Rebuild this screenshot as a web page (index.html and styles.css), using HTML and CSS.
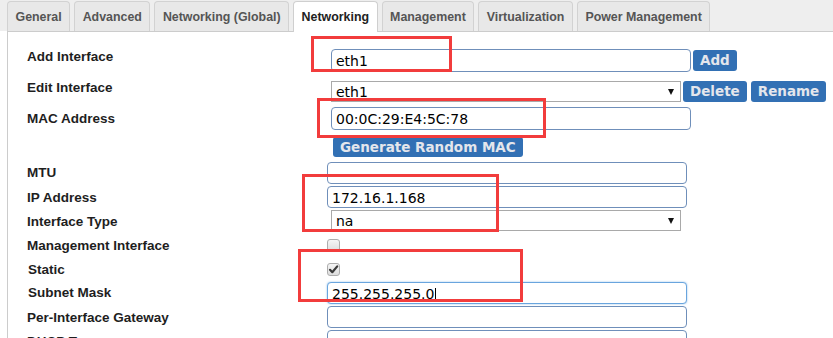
FILE: index.html
```html
<!DOCTYPE html>
<html>
<head>
<meta charset="utf-8">
<link rel="stylesheet" href="styles.css">
</head>
<body>
<div class="page">
  <div class="tabs">
    <div class="tab">General</div>
    <div class="tab">Advanced</div>
    <div class="tab">Networking (Global)</div>
    <div class="tab active">Networking</div>
    <div class="tab">Management</div>
    <div class="tab">Virtualization</div>
    <div class="tab">Power Management</div>
  </div>
  <div class="panel">
    <div class="form">
      <div class="lbl t0">Add Interface</div>
      <div class="ctrl m1 l4"><div class="in tall"><span class="val">eth1</span></div><span class="btn g2">Add</span></div>

      <div class="lbl t0">Edit Interface</div>
      <div class="ctrl m2 l4"><div class="sel"><span class="val">eth1</span><span class="arrow"></span></div><span class="btn g2">Delete</span><span class="btn g4">Rename</span></div>

      <div class="lbl">MAC Address</div>
      <div class="ctrl l4"><div class="in tall"><span class="val">00:0C:29:E4:5C:78</span></div></div>

      <div class="lbl"></div>
      <div class="ctrl l6"><span class="btn h20">Generate Random MAC</span></div>

      <div class="lbl t2">MTU</div>
      <div class="ctrl"><div class="in"></div></div>

      <div class="lbl">IP Address</div>
      <div class="ctrl"><div class="in"><span class="val">172.16.1.168</span></div></div>

      <div class="lbl">Interface Type</div>
      <div class="ctrl l4"><div class="sel"><span class="val">na</span><span class="arrow"></span></div></div>

      <div class="lbl">Management Interface</div>
      <div class="ctrl m5"><span class="cb"></span></div>

      <div class="lbl s1">Static</div>
      <div class="ctrl m5"><span class="cb"><svg width="11" height="11" viewBox="0 0 11 11"><path d="M2 5.8 L4.3 8.2 L9.2 2.4" fill="none" stroke="#3a3a3a" stroke-width="2.2" stroke-linecap="round" stroke-linejoin="round"/></svg></span></div>

      <div class="lbl t2 s1">Subnet Mask</div>
      <div class="ctrl"><div class="in focus"><span class="val">255.255.255.0</span><span class="caret"></span></div></div>

      <div class="lbl">Per-Interface Gateway</div>
      <div class="ctrl"><div class="in"></div></div>

      <div class="lbl">DHCP Type</div>
      <div class="ctrl"><div class="in"></div></div>
    </div>
  </div>
  <div class="mark mark-add"></div>
  <div class="mark mark-mac"></div>
  <div class="mark mark-ip"></div>
  <div class="mark mark-static"></div>
</div>
</body>
</html>
```
FILE: styles.css
```css
html, body {
  margin: 0;
  padding: 0;
  background: #fff;
}
.page {
  position: relative;
  width: 833px;
  height: 338px;
  overflow: hidden;
  font-family: "Liberation Sans", Arial, sans-serif;
}
.tabs {
  display: flex;
  align-items: flex-end;
  gap: 4px;
  height: 31px;
  padding-left: 7px;
  background: #eeeeee;
  box-sizing: border-box;
}
.tab {
  height: 30px;
  box-sizing: border-box;
  padding: 7px 7.5px 0 7.5px;
  line-height: 16px;
  font-size: 12.4px;
  font-weight: bold;
  color: #555;
  background: #e8e8e8;
  border: 1px solid #d2d2d2;
  border-bottom: none;
  border-radius: 4px 4px 0 0;
  white-space: nowrap;
}
.tab.active {
  height: 31px;
  margin-bottom: -1px;
  background: #fff;
  color: #222;
  border-color: #cfcfcf;
  position: relative;
  z-index: 1;
}
.panel {
  margin-left: 7px;
  height: 307px;
  box-sizing: border-box;
  border-top: 1px solid #cccccc;
  border-left: 1px solid #cccccc;
  padding: 16px 0 0 19px;
  overflow: hidden;
}
.form {
  display: grid;
  grid-template-columns: 300px 1fr;
  grid-template-rows: 31px 28px 30px 25px repeat(8, 24px);
}
.lbl {
  padding-top: 4px;
  font-size: 13.5px;
  line-height: 16px;
  font-weight: bold;
  color: #1e1e1e;
  white-space: nowrap;
}
.lbl.t0 { padding-top: 1px; }
.lbl.t2 { padding-top: 3px; }
.lbl.s1 { padding-left: 1px; }
.ctrl {
  display: flex;
  align-items: center;
  align-self: start;
}
.ctrl.m1 { margin-top: 1px; }
.ctrl.m2 { margin-top: 2px; }
.ctrl.m5 { margin-top: 5px; }
.ctrl.l4 { margin-left: 4px; }
.ctrl.l6 { margin-left: 6px; }
.in {
  width: 360px;
  height: 22px;
  box-sizing: border-box;
  border: 1px solid #6f8fba;
  border-radius: 4px;
  background: #fff;
  padding: 3px 4px 0;
  display: flex;
  align-items: flex-start;
}
.in.tall { height: 23px; }
.in.focus {
  border-color: #69a5de;
  box-shadow: 0 0 2px rgba(90, 160, 225, 0.7);
}
.val {
  font-family: "DejaVu Sans", Verdana, sans-serif;
  font-size: 14px;
  line-height: 16px;
  color: #000;
  white-space: nowrap;
}
.caret {
  width: 1px;
  height: 13px;
  margin-top: 2px;
  margin-left: 1px;
  background: #000;
}
.sel {
  width: 350px;
  height: 21px;
  box-sizing: border-box;
  border: 1px solid #a9a9a9;
  background: #fff;
  padding: 2px 6px 0 4px;
  display: flex;
  align-items: flex-start;
  justify-content: space-between;
}
.arrow {
  width: 0;
  height: 0;
  margin-top: 5px;
  border-left: 3.5px solid transparent;
  border-right: 3.5px solid transparent;
  border-top: 6px solid #111;
}
.btn {
  height: 21px;
  line-height: 21px;
  padding: 0 7px;
  box-sizing: border-box;
  background: #3270b4;
  color: #e4e6ec;
  border-radius: 3px;
  font-family: "DejaVu Sans", Verdana, sans-serif;
  font-weight: bold;
  font-size: 13.5px;
  white-space: nowrap;
}
.btn.h20 { height: 20px; line-height: 20px; }
.btn.g2 { margin-left: 2px; }
.btn.g4 { margin-left: 4px; }
.cb {
  width: 13px;
  height: 13px;
  box-sizing: border-box;
  border: 1px solid #adadad;
  border-radius: 3px;
  background: linear-gradient(#f5f5f5, #dddddd);
  display: flex;
  align-items: center;
  justify-content: center;
}
.cb svg { display: block; }
.mark {
  position: absolute;
  box-sizing: border-box;
  border: 3px solid #f23c3c;
  z-index: 5;
}
.mark-add { left: 311px; top: 36px; width: 141px; height: 36px; }
.mark-mac { left: 317px; top: 98px; width: 229px; height: 40px; }
.mark-ip { left: 302px; top: 174px; width: 197px; height: 58px; }
.mark-static { left: 298px; top: 249px; width: 225px; height: 53px; }
```
